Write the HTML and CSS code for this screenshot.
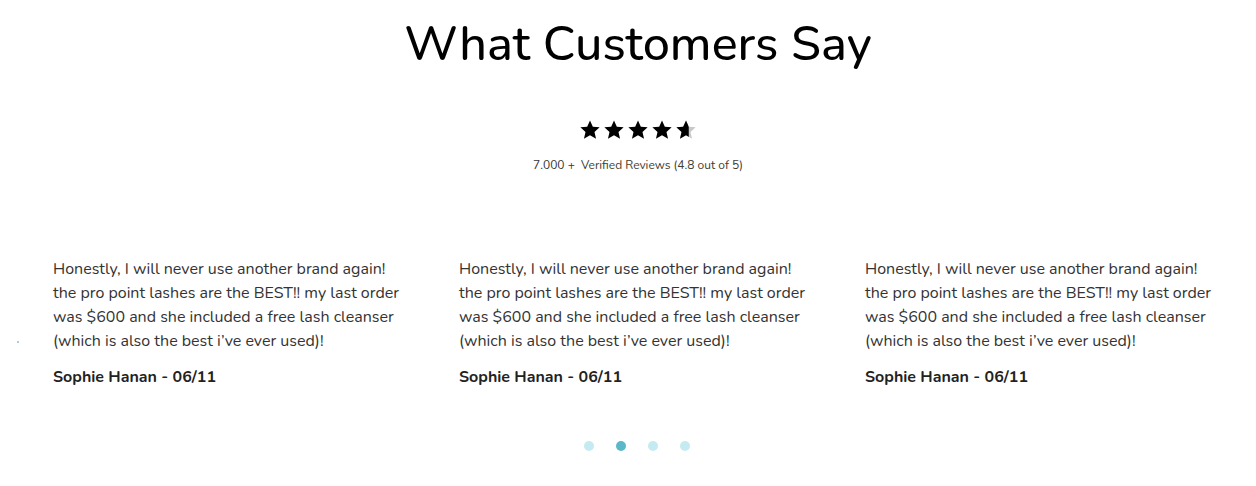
FILE: index.html
```html
<!DOCTYPE html>
<html lang="en">
<head>
<meta charset="utf-8">
<title>What Customers Say</title>
<link rel="stylesheet" href="styles.css">
</head>
<body>
<section class="reviews">
  <header class="head">
    <h2 class="title">What Customers Say</h2>
    <div class="rating">
      <div class="stars">
        <svg class="star" viewBox="0 0 24 24"><path d="M12 1.5l3.1 6.9 7.4.7-5.6 5 1.7 7.4L12 17.6l-6.6 3.9 1.7-7.4-5.6-5 7.4-.7z"/></svg>
        <svg class="star" viewBox="0 0 24 24"><path d="M12 1.5l3.1 6.9 7.4.7-5.6 5 1.7 7.4L12 17.6l-6.6 3.9 1.7-7.4-5.6-5 7.4-.7z"/></svg>
        <svg class="star" viewBox="0 0 24 24"><path d="M12 1.5l3.1 6.9 7.4.7-5.6 5 1.7 7.4L12 17.6l-6.6 3.9 1.7-7.4-5.6-5 7.4-.7z"/></svg>
        <svg class="star" viewBox="0 0 24 24"><path d="M12 1.5l3.1 6.9 7.4.7-5.6 5 1.7 7.4L12 17.6l-6.6 3.9 1.7-7.4-5.6-5 7.4-.7z"/></svg>
        <svg class="star" viewBox="0 0 24 24">
          <defs><clipPath id="half"><rect x="0" y="0" width="15" height="24"/></clipPath></defs>
          <path class="star-bg" d="M12 1.5l3.1 6.9 7.4.7-5.6 5 1.7 7.4L12 17.6l-6.6 3.9 1.7-7.4-5.6-5 7.4-.7z"/>
          <path clip-path="url(#half)" d="M12 1.5l3.1 6.9 7.4.7-5.6 5 1.7 7.4L12 17.6l-6.6 3.9 1.7-7.4-5.6-5 7.4-.7z"/>
        </svg>
      </div>
      <p class="count">7.000 +&nbsp; <span class="verified">Verified Reviews (4.8 out of 5)</span></p>
    </div>
  </header>
  <div class="carousel">
    <span class="edge-dot"></span>
    <article class="card">
      <p class="quote">Honestly, I will never use another brand again! the pro point lashes are the BEST!! my last order was $600 and she included a free lash cleanser (which is also the best i’ve ever used)!</p>
      <p class="author">Sophie Hanan - 06/11</p>
    </article>
    <article class="card">
      <p class="quote">Honestly, I will never use another brand again! the pro point lashes are the BEST!! my last order was $600 and she included a free lash cleanser (which is also the best i’ve ever used)!</p>
      <p class="author">Sophie Hanan - 06/11</p>
    </article>
    <article class="card">
      <p class="quote">Honestly, I will never use another brand again! the pro point lashes are the BEST!! my last order was $600 and she included a free lash cleanser (which is also the best i’ve ever used)!</p>
      <p class="author">Sophie Hanan - 06/11</p>
    </article>
  </div>
  <div class="dots">
    <span class="dot"></span>
    <span class="dot active"></span>
    <span class="dot"></span>
    <span class="dot"></span>
  </div>
</section>
</body>
</html>
```
FILE: styles.css
```css
* { box-sizing: border-box; }
html, body { margin: 0; padding: 0; background: #fff; }
body {
  font-family: "Nunito", "Open Sans", "Noto Sans", sans-serif;
  color: #333;
  width: 1256px;
  height: 486px;
  overflow: hidden;
}
.reviews {
  display: flex;
  flex-direction: column;
  padding-top: 13px;
}
.head {
  display: flex;
  flex-direction: column;
  align-items: center;
  padding-left: 20px;
}
.title {
  margin: 0;
  font-weight: 500;
  font-size: 48.5px;
  line-height: 62px;
  color: #000;
}
.rating {
  margin-top: 44px;
  display: flex;
  flex-direction: column;
  align-items: center;
}
.stars {
  display: flex;
  gap: 2px;
}
.star {
  width: 22px;
  height: 22px;
  fill: #000;
}
.star .star-bg { fill: #c8c8c8; }
.count {
  margin: 16px 0 0;
  font-size: 12px;
  line-height: 16px;
  color: #333;
}
.verified { color: #443c2c; }
.carousel {
  position: relative;
  display: grid;
  grid-template-columns: repeat(3, 406px);
  padding-left: 13px;
  margin-top: 84px;
}
.edge-dot {
  position: absolute;
  left: 17px;
  top: 84px;
  width: 2px;
  height: 2px;
  border-radius: 50%;
  background: #7cc6d2;
}
.card {
  padding: 0 20px 0 40px;
}
.quote {
  margin: 0;
  font-size: 16px;
  line-height: 24px;
  color: #333;
}
.author {
  margin: 12px 0 0;
  font-size: 16px;
  line-height: 24px;
  font-weight: 700;
  color: #222;
}
.dots {
  display: flex;
  justify-content: center;
  gap: 22px;
  margin-top: 52px;
  padding-left: 18px;
}
.dot {
  width: 10px;
  height: 10px;
  border-radius: 50%;
  background: #c5ebf2;
}
.dot.active { background: #5bb8c8; }
```
